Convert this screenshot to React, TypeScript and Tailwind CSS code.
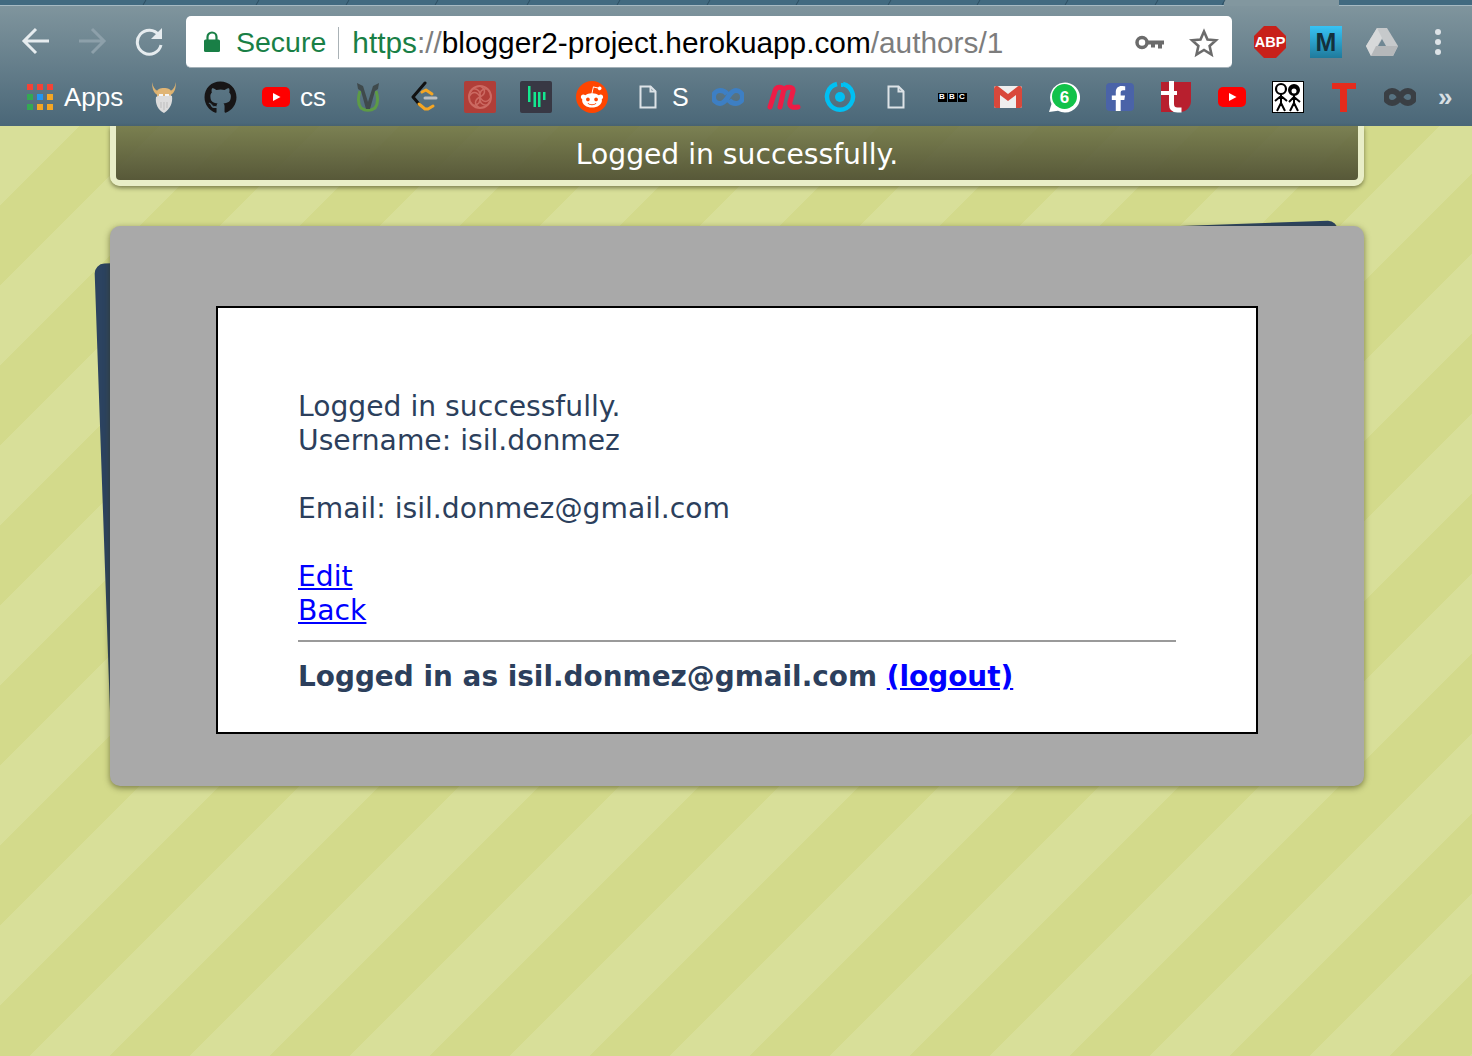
import { FaFacebookF, FaGithub, FaRedditAlien } from "react-icons/fa";

const tabWidths = [145, 113, 90, 89, 92, 90, 90, 89, 92, 89, 88, 90, 67];

const Doc = () => (
  <svg width="18" height="24" viewBox="0 0 18 24" fill="none" stroke="#dde3e7" strokeWidth="2">
    <path d="M1.5 1.5h10l5 5v16h-15z" />
    <path d="M11.5 1.5v5h5" />
  </svg>
);

const YouTube = () => (
  <svg width="30" height="22" viewBox="0 0 30 22">
    <rect x="1" y="1" width="28" height="20" rx="5" fill="#ff0000" />
    <path d="M12 7l7.5 4-7.5 4z" fill="#fff" />
  </svg>
);

const Viking = () => (
  <svg width="24" height="31" viewBox="0 0 24 31">
    <path d="M0 0c1 5 3 8 6 9v4C2 12 0 7 0 0zM24 0c-1 5-3 8-6 9v4c4-1 6-6 6-13z" fill="#dcb271" />
    <path d="M5 10c0-3 3-4 7-4s7 1 7 4v7H5z" fill="#e0b575" />
    <path d="M4 15c3-2 5-1 8-1s5-1 8 0c1 7-2 13-8 17C6 28 3 22 4 15z" fill="#dcdcdc" />
    <path d="M7 13h4M13 13h4" stroke="#f4f4f4" strokeWidth="2" />
    <path d="M9 20v6M12 20v8M15 20v6" stroke="#bdbdbd" strokeWidth="1" />
  </svg>
);

const Bookmarks = () => (
  <div className="flex h-[58px] items-center pl-3 font-['Liberation_Sans',sans-serif] text-[26px] text-white">
    <div className="flex w-[124px] items-center">
      <div className="ml-[15px] grid w-[26px] grid-cols-3 gap-1">
        {["#f44336", "#f44336", "#f44336", "#34a853", "#2196f3", "#f5a623", "#34a853", "#f5a623", "#f5a623"].map((color, i) => (
          <span key={i} className="h-1.5 w-1.5" style={{ backgroundColor: color }} />
        ))}
      </div>
      <span className="ml-[11px]">Apps</span>
    </div>
    <Cell><Viking /></Cell>
    <Cell><FaGithub className="text-[33px] text-[#171516]" /></Cell>
    <div className="flex w-[92px] items-center pl-[13px]">
      <YouTube />
      <span className="ml-[9px]">cs</span>
    </div>
    <Cell>
      <svg width="26" height="30" viewBox="0 0 26 30" fill="none">
        <path d="M5 9c-2 6-2 13 1 17 4 3 10 3 14 0 3-4 3-11 1-17" stroke="#5d9b46" strokeWidth="3" />
        <path d="M2 1l6 3 5 16 5-16 6-3-1 6-3 2-5 18h-4L6 9 3 7z" fill="#3f4a4c" />
      </svg>
    </Cell>
    <Cell>
      <svg width="28" height="32" viewBox="0 0 28 32" fill="none" strokeLinecap="round" strokeLinejoin="round">
        <path d="M15 2L3 16l6 7" stroke="#111" strokeWidth="3" />
        <path d="M9 23l6 5h3l5-3M12 11l4-2 6 4" stroke="#f5a623" strokeWidth="3" />
        <path d="M15 17h11" stroke="#b9bec1" strokeWidth="3" />
      </svg>
    </Cell>
    <Cell>
      <svg width="32" height="32" viewBox="0 0 32 32" fill="none">
        <rect width="32" height="32" rx="2" fill="#b03e38" />
        <circle cx="16" cy="16" r="11" stroke="#cc6a62" strokeWidth="2" />
        <path d="M16 5c6 3 6 8 0 11s-6 8 0 11M5 16c3-6 8-6 11 0s8 6 11 0M8 8c6-1 9 3 8 8s2 9 8 8M24 8c-6-1-9 3-8 8s-2 9-8 8" stroke="#cc6a62" strokeWidth="1.5" />
      </svg>
    </Cell>
    <Cell>
      <svg width="32" height="32" viewBox="0 0 32 32">
        <rect width="32" height="32" rx="2" fill="#383844" />
        <path d="M8 5h2.500v16H8zM13.500 11H16v15h-2.500zM18 11h2.500v15H18zM23 11h2.500v8H23z" fill="#14e88f" />
      </svg>
    </Cell>
    <Cell>
      <div className="flex h-8 w-8 items-center justify-center rounded-full bg-[#ff4500]">
        <FaRedditAlien className="text-[24px] text-white" />
      </div>
    </Cell>
    <div className="flex w-20 items-center pl-[19px]">
      <Doc />
      <span className="ml-[15px] text-[25px]">S</span>
    </div>
    <Cell>
      <svg width="32" height="18" viewBox="0 0 32 18" fill="none">
        <path d="M15 6c-2-3-4-3.500-7-3.500a6.500 6.500 0 000 13c4 0 6-3.500 8-6.500s4-6.500 8-6.500a6.500 6.500 0 010 13c-3 0-5-.5-7-3.500" stroke="#3d7fc4" strokeWidth="5" />
      </svg>
    </Cell>
    <Cell>
      <svg width="34" height="28" viewBox="0 0 34 28" fill="none" strokeLinecap="round" strokeLinejoin="round">
        <path d="M3 24L8 8c1-5 9-5 8.500 0L13 24M16.500 8c1.500-5 10.500-5 9.500 0l-3 11c-1 5 3 6 8 5" stroke="#ee1c46" strokeWidth="5" />
      </svg>
    </Cell>
    <Cell>
      <svg width="32" height="32" viewBox="0 0 32 32" fill="none">
        <path d="M19 3a13 13 0 11-6 0" stroke="#00c0f3" strokeWidth="4.500" />
        <path d="M18 2v4" stroke="#00c0f3" strokeWidth="2" />
        <circle cx="16" cy="16" r="5" fill="#00c0f3" />
      </svg>
    </Cell>
    <Cell><Doc /></Cell>
    <Cell>
      <div className="flex gap-px text-[8px] font-bold leading-none">
        {["B", "B", "C"].map((letter, i) => (
          <span key={i} className="flex h-[9px] w-[9px] items-center justify-center bg-black text-white">{letter}</span>
        ))}
      </div>
    </Cell>
    <Cell>
      <svg width="28" height="22" viewBox="0 0 28 22">
        <rect width="28" height="22" rx="2" fill="#eeeeee" />
        <path d="M0 3v17a2 2 0 002 2h4V9l8 6 8-6v13h4a2 2 0 002-2V3c0-3-3-4-5-2l-9 7-9-7C3-1 0 0 0 3z" fill="#d9483b" />
      </svg>
    </Cell>
    <Cell>
      <svg width="32" height="32" viewBox="0 0 32 32">
        <path d="M1 31l2.500-8A15 15 0 1110 29.800z" fill="#fff" />
        <circle cx="16.500" cy="15.500" r="12.500" fill="#12c24a" />
        <text x="16.500" y="21.500" textAnchor="middle" fontFamily="Liberation Sans, sans-serif" fontWeight="700" fontSize="17" fill="#fff">6</text>
      </svg>
    </Cell>
    <Cell>
      <div className="flex h-7 w-7 items-end justify-end overflow-hidden rounded-sm bg-[#4a63a8] pr-[3px]">
        <FaFacebookF className="text-[25px] text-white" />
      </div>
    </Cell>
    <Cell>
      <svg width="32" height="32" viewBox="0 0 32 32" fill="none">
        <path d="M1 1h30v19a11 11 0 01-11 11H1z" fill="#b81f2e" />
        <path d="M1 1h8v30H1z" fill="#b81f2e" />
        <path d="M1 10h16v4H1z" fill="#fff" />
        <path d="M11.500 0v23c0 4 2 6 6 6h4" stroke="#fff" strokeWidth="5" />
      </svg>
    </Cell>
    <Cell><YouTube /></Cell>
    <Cell>
      <svg width="32" height="32" viewBox="0 0 32 32" fill="none" stroke="#000" strokeWidth="2">
        <rect x="0.500" y="0.500" width="31" height="31" fill="#fff" strokeWidth="1" />
        <circle cx="9" cy="8" r="5" strokeWidth="2.200" />
        <circle cx="22" cy="9" r="5" fill="#000" />
        <circle cx="22" cy="10" r="2.500" fill="#fff" stroke="none" />
        <path d="M9 13v9l-4 8M9 22l4 8M9 15l-6 5M9 15l6 5M22 14v8l-4 8M22 22l4 8M22 16l-5 5M22 16l6 5" />
      </svg>
    </Cell>
    <Cell>
      <svg width="26" height="30" viewBox="0 0 26 30">
        <path d="M1 1h24v6h-9v23H9V7H1z" fill="#e52b1c" />
      </svg>
    </Cell>
    <Cell>
      <svg width="32" height="18" viewBox="0 0 32 18" fill="none">
        <path d="M16 9c-2-4-4-6-8-6a6 6 0 000 12c4 0 6-2 8-6s4-6 8-6a6 6 0 010 12c-4 0-6-2-8-6z" stroke="#3a3f44" strokeWidth="6" />
      </svg>
    </Cell>
    <span className="ml-[10px] text-[26px] font-bold leading-none text-[#d7dfe3]">»</span>
  </div>
);

const Cell = ({ children }: { children: React.ReactNode }) => (
  <div className="flex w-14 items-center justify-center">{children}</div>
);

const Toolbar = () => (
  <div className="flex h-[62px] items-start pt-[10px]">
    <div className="flex w-[186px] shrink-0 items-center pl-[21px] pt-[10px]">
      <svg width="30" height="30" viewBox="0 0 30 30" fill="none" stroke="#e6ecef" strokeWidth="3">
        <path d="M28 15H4M15 3L3 15l12 12" />
      </svg>
      <svg className="ml-[26px]" width="30" height="30" viewBox="0 0 30 30" fill="none" stroke="#8da0aa" strokeWidth="3">
        <path d="M2 15h24M15 3l12 12-12 12" />
      </svg>
      <svg className="ml-[28px]" width="30" height="30" viewBox="0 0 30 30" fill="none">
        <path d="M24 9a12 12 0 102 10" stroke="#e6ecef" strokeWidth="3" />
        <path d="M27 2v11H16z" fill="#e6ecef" />
      </svg>
    </div>

    <div className="flex h-[52px] w-[1046px] shrink-0 items-center rounded-[5px] border-b border-[#a3b0b7] bg-white pl-[17px] pr-[13px] pt-[2px] font-['Liberation_Sans',sans-serif] text-[28.500px] leading-none">
      <svg width="18" height="22" viewBox="0 0 18 22" className="mb-0.5">
        <path d="M4.500 9V6a4.500 4.500 0 019 0v3" fill="none" stroke="#197f46" strokeWidth="2.200" />
        <rect x="1" y="8.500" width="16" height="12.500" rx="1.500" fill="#197f46" />
      </svg>
      <span className="ml-[15px] text-[#197f46]">Secure</span>
      <span className="ml-3 h-8 w-px bg-[#aab2b6]" />
      <span className="ml-[13px] flex-1 whitespace-nowrap text-[29.800px]">
        <span className="text-[#197f46]">https</span>
        <span className="text-[#7d7d7d]">://</span>
        <span className="text-black">blogger2-project.herokuapp.com</span>
        <span className="text-[#7d7d7d]">/authors/1</span>
      </span>
      <svg width="30" height="18" viewBox="0 0 30 18" fill="none">
        <circle cx="7" cy="8.500" r="5" stroke="#6b6b6b" strokeWidth="3.500" />
        <path d="M11 6.500h18v4h-2v4h-4v-4h-3v3h-4v-3h-5z" fill="#6b6b6b" />
      </svg>
      <svg className="ml-6" width="30" height="30" viewBox="0 0 30 30" fill="none">
        <path d="M15 3.500l3.500 8 8.500.800-6.400 5.700 1.900 8.500L15 22l-7.500 4.500 1.900-8.500L3 12.300l8.500-.800z" stroke="#6b6b6b" strokeWidth="2.600" strokeLinejoin="miter" />
      </svg>
    </div>

    <div className="flex shrink-0 items-center pl-[22px] pt-[10px]">
      <svg width="32" height="32" viewBox="0 0 32 32">
        <path d="M10 0h12l10 10v12L22 32H10L0 22V10z" fill="#c8211a" />
        <text x="16" y="21" textAnchor="middle" fontFamily="Liberation Sans, sans-serif" fontWeight="700" fontSize="14.500" fill="#fff">ABP</text>
      </svg>
      <div className="ml-6 flex h-8 w-8 items-center justify-center bg-[linear-gradient(#37c3f5,#1f7a9c)] font-['Liberation_Sans',sans-serif] text-[25px] font-bold leading-none text-[#14303c]">M</div>
      <svg className="ml-6" width="32" height="28" viewBox="0 0 32 28">
        <path d="M11 0h10l11 18-5 10H5L0 18z" fill="#c6c9cb" />
        <path d="M11 0L0 18l5 10 11-18z" fill="#d7d9da" />
        <path d="M12 18h8l-4-7z" fill="#6f8793" />
        <path d="M5 28l5-10h22l-5 10z" fill="#b5b8ba" />
      </svg>
      <div className="ml-[37px] flex flex-col gap-1">
        <span className="h-1.5 w-1.5 rounded-full bg-[#dde3e7]" />
        <span className="h-1.5 w-1.5 rounded-full bg-[#dde3e7]" />
        <span className="h-1.5 w-1.5 rounded-full bg-[#dde3e7]" />
      </div>
    </div>
  </div>
);

const Chrome = () => (
  <header className="bg-[linear-gradient(#82979f,#4a6778)]">
    <div className="flex h-[6px] border-b border-[#a7bac3] bg-[#426a80]">
      {tabWidths.map((width, i) => (
        <div key={i} className="shrink-0 -skew-x-[30deg] border-r border-[#2e4e60]" style={{ width }} />
      ))}
      <div className="h-[6px] w-[115px] shrink-0 bg-[#82979f]" />
    </div>
    <Toolbar />
    <Bookmarks />
  </header>
);

export default function App() {
  return (
    <div className="min-h-screen bg-[repeating-linear-gradient(135deg,#d8df99_0px,#d8df99_31.82px,#d3da8b_31.82px,#d3da8b_88.39px,#d8df99_88.39px,#d8df99_113.14px)] font-['DejaVu_Sans',sans-serif] text-[28.200px] leading-[34px] text-[#2c3f5c]">
      <Chrome />

      <main className="ml-[110px] w-[1254px]">
        <div className="rounded-b-[10px] border-x-[6px] border-b-[6px] border-[#e9eec8] bg-[linear-gradient(rgba(100,105,65,0.8),rgba(85,86,55,0.98))] pb-[8px] pt-[12px] text-center text-white shadow-[0_2px_4px_rgba(60,60,30,0.6)]">
          Logged in successfully.
        </div>

        <div className="relative mt-10">
          <div className="absolute left-[-8px] top-[16px] h-[460px] w-[1244px] -rotate-2 rounded-[10px] bg-[#2c4360]" />
          <div className="relative h-[560px] rounded-[10px] bg-[#a9a9a9] px-[106px] pt-20 shadow-[0_2px_6px_rgba(60,60,20,0.6)]">
            <div className="h-[428px] border-2 border-black bg-white px-20 pt-[82px]">
              <div>Logged in successfully.</div>
              <div>Username: isil.donmez</div>
              <div className="mt-[34px]">Email: isil.donmez@gmail.com</div>
              <div className="mt-[34px]"><a href="#" className="text-[#0000ff] underline">Edit</a></div>
              <div><a href="#" className="text-[#0000ff] underline">Back</a></div>
              <hr className="mb-[18px] mt-[12px] border-t-2 border-[#9a9a9a]" />
              <div className="text-[27.900px] font-bold">
                Logged in as isil.donmez@gmail.com{" "}
                <a href="#" className="text-[#0000ff] underline">(logout)</a>
              </div>
            </div>
          </div>
        </div>
      </main>
    </div>
  );
}
